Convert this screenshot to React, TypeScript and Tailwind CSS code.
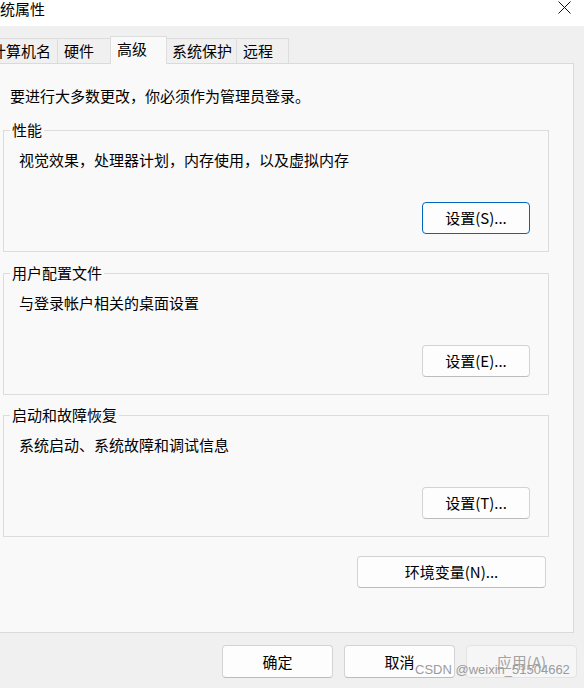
import React from 'react';

const cjk = "font-['Noto_Sans_CJK_SC','Noto_Sans',sans-serif]";

function Tab({ label, className }: { label: string; className: string }) {
  return (
    <div
      className={`-ml-px flex h-[25px] items-center border-l border-r border-t border-[#dddddd] bg-[#f0f0f0] text-[15px] leading-[20px] text-black ${className}`}
    >
      {label}
    </div>
  );
}

function WinButton({
  label,
  className = '',
  focused = false,
  disabled = false,
}: {
  label: string;
  className?: string;
  focused?: boolean;
  disabled?: boolean;
}) {
  const tone = disabled
    ? 'border-[#e3e3e3] bg-[#f6f6f6] text-[#a3a3a3]'
    : focused
      ? 'border-[#0067c0] bg-[#fdfdfd] text-black'
      : 'border-[#d3d3d3] border-b-[#bcbcbc] bg-[#fdfdfd] text-black';
  return (
    <button
      type="button"
      className={`flex items-center justify-center rounded-[4px] border text-[15px] leading-[20px] ${tone} ${className}`}
    >
      {label}
    </button>
  );
}

function Group({
  title,
  desc,
  button,
  focused,
  className,
}: {
  title: string;
  desc: string;
  button: string;
  focused?: boolean;
  className: string;
}) {
  return (
    <div className={`relative flex h-[122px] w-[546px] flex-col border border-[#dcdcdc] ${className}`}>
      <span className="absolute -top-[11px] left-[6px] bg-[#f9f9f9] px-[2px] text-[15px] leading-[20px] text-black">
        {title}
      </span>
      <p className="pl-[15px] pt-[19px] text-[15px] leading-[20px] text-black">{desc}</p>
      <WinButton label={button} focused={focused} className="mr-[18px] mt-[32px] h-[32px] w-[108px] self-end" />
    </div>
  );
}

export default function App() {
  return (
    <div className={`relative h-[688px] w-[584px] overflow-hidden bg-[#f0f0f0] ${cjk}`}>
      {/* title bar */}
      <div className="flex h-[26px] items-start justify-between bg-white">
        <span className="-ml-[15px] text-[15px] leading-[18px] text-black">系统属性</span>
        <svg className="mr-[13px] mt-px" width="13" height="13" viewBox="0 0 13 13">
          <path d="M0.5 0.5L12.5 12.5M12.5 0.5L0.5 12.5" stroke="#111" strokeWidth="1" fill="none" />
        </svg>
      </div>

      {/* tabs */}
      <div className="flex items-end pt-[10px]">
        <Tab label="计算机名" className="ml-[-17px] w-[75px] pl-[7px]" />
        <Tab label="硬件" className="w-[54px] pl-[6px]" />
        <div className="relative z-10 -mb-px -ml-px flex h-[28px] w-[57px] items-center border-l border-r border-t border-[#dddddd] bg-[#f9f9f9] pb-[3px] pl-[6px] text-[15px] leading-[20px] text-black">
          高级
        </div>
        <Tab label="系统保护" className="w-[71px] pl-[5px]" />
        <Tab label="远程" className="w-[53px] pl-[6px]" />
      </div>

      {/* tab page */}
      <div className="-ml-px flex h-[570px] w-[575px] flex-col border border-[#dadada] bg-[#f9f9f9] pl-[3px] pt-[22px]">
        <p className="ml-[7px] text-[15px] leading-[20px] text-black">要进行大多数更改，你必须作为管理员登录。</p>
        <Group
          className="mt-[24px]"
          title="性能"
          desc="视觉效果，处理器计划，内存使用，以及虚拟内存"
          button="设置(S)..."
          focused
        />
        <Group className="mt-[21px]" title="用户配置文件" desc="与登录帐户相关的桌面设置" button="设置(E)..." />
        <Group className="mt-[20px]" title="启动和故障恢复" desc="系统启动、系统故障和调试信息" button="设置(T)..." />
        <WinButton label="环境变量(N)..." className="mr-[27px] mt-[19px] h-[32px] w-[189px] self-end" />
      </div>

      {/* dialog buttons */}
      <div className="flex justify-end gap-[11px] pr-[7px] pt-[12px]">
        <WinButton label="确定" className="h-[33px] w-[111px]" />
        <WinButton label="取消" className="h-[33px] w-[111px]" />
        <WinButton label="应用(A)" disabled className="h-[33px] w-[111px]" />
      </div>

      <span className="absolute left-[415px] top-[662px] font-['Liberation_Sans',sans-serif] text-[13px] leading-[16px] text-[#9b9b9b]">
        CSDN @weixin_51504662
      </span>
    </div>
  );
}
